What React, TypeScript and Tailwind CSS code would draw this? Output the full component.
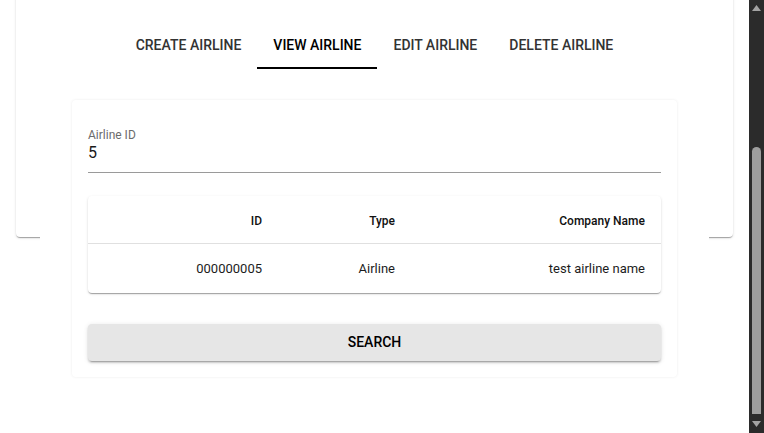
import React from 'react';

const tabs = ['Create Airline', 'View Airline', 'Edit Airline', 'Delete Airline'];

const rows = [{ id: '000000005', type: 'Airline', company: 'test airline name' }];

// medium weight text: try the real Medium face before falling back to Roboto
const medium = "font-['Roboto_Medium',Roboto,sans-serif] font-medium";

function Scrollbar() {
  return (
    <div className="w-[15px] h-full bg-[#2b2b2b] flex flex-col items-center shrink-0">
      <svg width="9" height="7" viewBox="0 0 9 7" className="mt-[5px]">
        <polygon points="4.5,0 9,6 0,6" fill="#a3a3a3" />
      </svg>
      <div className="flex-1 w-full flex flex-col justify-end items-center">
        <div className="w-[9px] h-[267px] bg-[#9e9e9e] rounded-t-full rounded-b-[4px]" />
      </div>
      <svg width="9" height="7" viewBox="0 0 9 7" className="mt-[7px] mb-[5px]">
        <polygon points="0,0 9,0 4.5,6" fill="#a3a3a3" />
      </svg>
    </div>
  );
}

export default function App() {
  const active = 1;

  return (
    <div className="flex h-[433px] overflow-hidden bg-white font-[Roboto,'Noto_Sans',sans-serif] antialiased">
      <div className="flex-1 px-4">
        {/* outer card, scrolled so its top is off screen */}
        <div className="-mt-[20px] h-[257px] bg-white rounded-[4px] shadow-[0_2px_1px_-1px_rgba(0,0,0,0.2),0_1px_1px_0_rgba(0,0,0,0.14),0_1px_3px_0_rgba(0,0,0,0.12)] px-6 pt-[41px]">
          <div className="flex justify-center">
            {tabs.map((t, i) => (
              <div
                key={t}
                className={`h-[48px] px-4 flex items-center uppercase text-[14px] ${medium} ${
                  i === active ? 'text-black border-b-2 border-black pt-[3px]' : 'text-[#333333] pt-[1px]'
                }`}
              >
                {t}
              </div>
            ))}
          </div>

          <div className="bg-white px-8 pt-[31px] pb-8">
            <div className="bg-white rounded-[4px] shadow-[0_0_3px_rgba(0,0,0,0.08)] p-4">
              {/* text field */}
              <div className="pt-[12px]">
                <div className="text-[12px] leading-[14px] h-[14px] text-[#6b6b6b]">Airline ID</div>
                <div className="mt-[-1px] h-[32px] text-[16px] leading-[23px] text-[#1a1a1a] border-b border-[#9a9a9a]">5</div>
              </div>

              {/* results table */}
              <div className="mt-[23px] bg-white rounded-[4px] shadow-[0_2px_1px_-1px_rgba(0,0,0,0.2),0_1px_1px_0_rgba(0,0,0,0.14),0_1px_3px_0_rgba(0,0,0,0.12)]">
                <div className={`flex h-[48px] items-center pt-[3px] border-b border-[#e0e0e0] text-[12px] ${medium} text-[#111]`}>
                  <div className="w-[190px] text-right pr-4">ID</div>
                  <div className="w-[133px] text-right pr-4">Type</div>
                  <div className="flex-1 text-right pr-4">Company Name</div>
                </div>
                {rows.map(r => (
                  <div key={r.id} className="flex h-[49px] items-center text-[13px] text-[#1c1c1c]">
                    <div className="w-[190px] text-right pr-4">{r.id}</div>
                    <div className="w-[133px] text-right pr-4">{r.type}</div>
                    <div className="flex-1 text-right pr-4">{r.company}</div>
                  </div>
                ))}
              </div>

              <button className={`mt-[31px] w-full h-[37px] bg-[#e6e6e6] rounded-[4px] text-[14px] ${medium} text-black uppercase shadow-[0_3px_1px_-2px_rgba(0,0,0,0.2),0_2px_2px_0_rgba(0,0,0,0.14),0_1px_5px_0_rgba(0,0,0,0.12)]`}>
                Search
              </button>
            </div>
          </div>
        </div>
      </div>
      <Scrollbar />
    </div>
  );
}
